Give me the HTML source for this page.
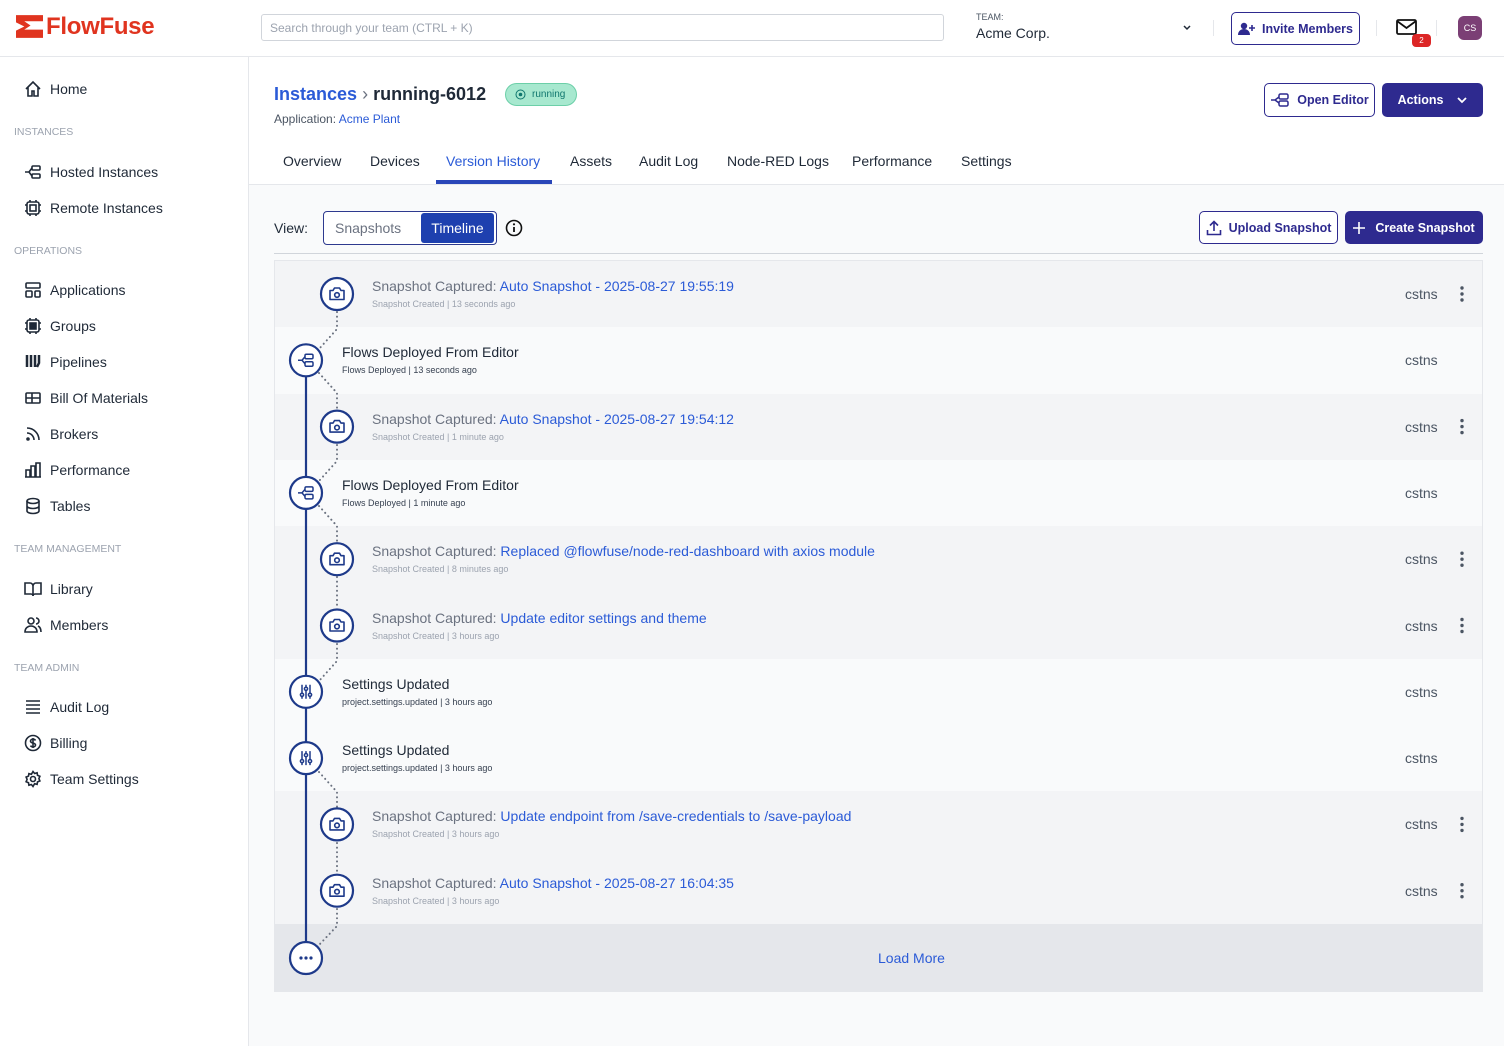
<!DOCTYPE html>
<html><head><meta charset="utf-8"><style>
*{box-sizing:border-box;margin:0;padding:0}
body{width:1504px;height:1046px;overflow:hidden;font-family:"Liberation Sans",sans-serif;color:#1f2937;background:#fff;position:relative}
.abs{position:absolute}
.hdr{left:0;top:0;width:1504px;height:57px;border-bottom:1px solid #e5e7eb;background:#fff}
.side{left:0;top:57px;width:249px;height:989px;border-right:1px solid #e5e7eb;background:#fff}
.nav{position:absolute;left:24px;font-size:14px;color:#1f2937;display:flex;align-items:center;gap:8px}
.nav svg{width:18px;height:18px;fill:none;stroke:#1f2937;stroke-width:1.6}
.sec{position:absolute;left:14px;font-size:10.5px;color:#9ca3af}
.main{left:249px;top:184px;width:1255px;height:862px;background:#f9fafb;border-top:1px solid #e5e7eb}
.tab{position:absolute;top:153px;font-size:14px;color:#1f2937}
.btn{position:absolute;border-radius:5px;font-size:12.5px;font-weight:bold;display:flex;align-items:center;justify-content:center;gap:7px}
.ol{border:1px solid #2e2a8f;color:#2e2a8f;background:#fff}
.fl{background:#2e2a8f;color:#fff}
.row{position:absolute;left:0;width:1207px;height:67px}
.g{background:#f3f4f6}.l{background:#f9fafb}
.t{position:absolute;font-size:14px;top:17px}
.s{position:absolute;font-size:9px;top:38px}
.user{position:absolute;left:1130px;top:25px;font-size:14px;color:#4b5563}
a{color:#2b5bd7;text-decoration:none}
</style></head><body>
<div class="abs hdr">
 <svg class="abs" style="left:16px;top:15px" width="27" height="23" viewBox="0 0 26 22"><path d="M0 0h26v6H8l6 4-6 4h18v8H0v-7l8-4-8-4z" fill="#e0341f"/></svg>
 <div class="abs" style="left:46px;top:13px;font-size:24px;font-weight:bold;color:#e0341f;letter-spacing:-0.3px">FlowFuse</div>
 <div class="abs" style="left:261px;top:14px;width:683px;height:27px;border:1px solid #d1d5db;border-radius:3px;font-size:12px;color:#9ca3af;padding:6px 8px">Search through your team (CTRL + K)</div>
 <div class="abs" style="left:976px;top:12px;font-size:9px;color:#4b5563">TEAM:</div>
 <div class="abs" style="left:976px;top:25px;font-size:14px;color:#1f2937">Acme Corp.</div>
 <svg class="abs" style="left:1182px;top:23px" width="10" height="10" viewBox="0 0 10 10"><path d="M2 3l3 3 3-3" stroke="#1f2937" stroke-width="1.5" fill="none"/></svg>
 <div class="abs" style="left:1213px;top:20px;width:1px;height:16px;background:#e5e7eb"></div>
 <div class="btn ol" style="left:1231px;top:12px;width:129px;height:33px"><svg width="17" height="14" viewBox="0 0 17 14"><circle cx="6" cy="4" r="3.2" fill="#2e2a8f"/><path d="M0 13c0-4 3-6 6-6s6 2 6 6z" fill="#2e2a8f"/><path d="M14 3v6M11 6h6" stroke="#2e2a8f" stroke-width="1.6"/></svg>Invite Members</div>
 <div class="abs" style="left:1376px;top:20px;width:1px;height:16px;background:#e5e7eb"></div>
 <svg class="abs" style="left:1396px;top:19px" width="21" height="16" viewBox="0 0 21 16"><rect x="1" y="1" width="19" height="14" rx="1.5" fill="none" stroke="#111" stroke-width="1.8"/><path d="M1 2l9.5 7L20 2" fill="none" stroke="#111" stroke-width="1.8"/></svg>
 <div class="abs" style="left:1412px;top:34px;width:19px;height:13px;border-radius:4px;background:#dc2626;color:#fff;font-size:8px;text-align:center;line-height:13px">2</div>
 <div class="abs" style="left:1436px;top:20px;width:1px;height:16px;background:#e5e7eb"></div>
 <div class="abs" style="left:1458px;top:16px;width:24px;height:24px;border-radius:6px;background:#7b3f75;color:#fff;font-size:9px;text-align:center;line-height:24px">CS</div>
</div>
<div class="abs side"></div>
<div class="nav" style="top:80px"><svg viewBox="0 0 18 18"><path d="M2 9L9 2l7 7M4 7v9h4v-5h2v5h4V7"/></svg>Home</div>
<div class="sec" style="top:126px">INSTANCES</div>
<div class="nav" style="top:163px"><svg viewBox="0 0 18 18"><rect x="8" y="3" width="8" height="4" rx="1"/><rect x="8" y="11" width="8" height="4" rx="1"/><path d="M1 9h4M5 9l3-4M5 9l3 4"/></svg>Hosted Instances</div>
<div class="nav" style="top:199px"><svg viewBox="0 0 18 18"><rect x="3" y="3" width="12" height="12" rx="2"/><rect x="6" y="6" width="6" height="6"/><path d="M1 6h2M1 12h2M15 6h2M15 12h2M6 1v2M12 1v2M6 15v2M12 15v2"/></svg>Remote Instances</div>
<div class="sec" style="top:245px">OPERATIONS</div>
<div class="nav" style="top:281px"><svg viewBox="0 0 18 18"><rect x="2" y="2" width="14" height="5" rx="1"/><rect x="2" y="10" width="6" height="6" rx="1"/><rect x="11" y="10" width="5" height="6" rx="1"/></svg>Applications</div>
<div class="nav" style="top:317px"><svg viewBox="0 0 18 18"><rect x="3" y="3" width="12" height="12" rx="2"/><rect x="6" y="6" width="6" height="6" fill="#1f2937"/><path d="M1 6h2M1 12h2M15 6h2M15 12h2M6 1v2M12 1v2M6 15v2M12 15v2"/></svg>Groups</div>
<div class="nav" style="top:353px"><svg viewBox="0 0 18 18"><path d="M3 2v12M7 2v12M11 2v12M15 2v8l-2 4" stroke-width="2.5"/></svg>Pipelines</div>
<div class="nav" style="top:389px"><svg viewBox="0 0 18 18"><rect x="2" y="4" width="14" height="10" rx="1"/><path d="M2 9h14M8 4v10"/></svg>Bill Of Materials</div>
<div class="nav" style="top:425px"><svg viewBox="0 0 18 18"><path d="M3 3a12 12 0 0 1 12 12M3 8a7 7 0 0 1 7 7"/><circle cx="4" cy="14" r="1" fill="#1f2937"/></svg>Brokers</div>
<div class="nav" style="top:461px"><svg viewBox="0 0 18 18"><path d="M2 16V9h4v7M7 16V5h4v11M12 16V2h4v14M1 16h16"/></svg>Performance</div>
<div class="nav" style="top:497px"><svg viewBox="0 0 18 18"><ellipse cx="9" cy="4" rx="6" ry="2.5"/><path d="M3 4v10c0 1.4 2.7 2.5 6 2.5s6-1.1 6-2.5V4M3 9c0 1.4 2.7 2.5 6 2.5S15 10.4 15 9"/></svg>Tables</div>
<div class="sec" style="top:543px">TEAM MANAGEMENT</div>
<div class="nav" style="top:580px"><svg viewBox="0 0 18 18"><path d="M1 3h5a3 3 0 0 1 3 3v10a2 2 0 0 0-2-2H1zM17 3h-5a3 3 0 0 0-3 3v10a2 2 0 0 1 2-2h6z"/></svg>Library</div>
<div class="nav" style="top:616px"><svg viewBox="0 0 18 18"><circle cx="7" cy="5" r="3"/><path d="M1 16c0-4 3-6 6-6s6 2 6 6zM12 2a3 3 0 0 1 0 6M14 10c2 1 3 3 3 6"/></svg>Members</div>
<div class="sec" style="top:662px">TEAM ADMIN</div>
<div class="nav" style="top:698px"><svg viewBox="0 0 18 18"><path d="M2 3h14M2 7h14M2 11h14M2 15h14"/></svg>Audit Log</div>
<div class="nav" style="top:734px"><svg viewBox="0 0 18 18"><circle cx="9" cy="9" r="7.5"/><path d="M11.5 6.5c-.5-1-1.5-1.3-2.5-1.3-1.5 0-2.5.8-2.5 1.9 0 2.6 5 1.3 5 3.9 0 1.1-1 1.9-2.5 1.9-1 0-2-.4-2.5-1.3M9 4v10"/></svg>Billing</div>
<div class="nav" style="top:770px"><svg viewBox="0 0 18 18"><circle cx="9" cy="9" r="2.5"/><path d="M9 1.5l1.6 2 2.5-.7.4 2.5 2.4 1-1 2.3 1 2.3-2.4 1-.4 2.5-2.5-.7L9 16.5l-1.6-2-2.5.7-.4-2.5-2.4-1 1-2.3-1-2.3 2.4-1 .4-2.5 2.5.7z"/></svg>Team Settings</div>

<div class="abs" style="left:274px;top:84px;font-size:18px;font-weight:bold"><span style="color:#2b5bd7">Instances</span> <span style="color:#6b7280;font-weight:normal">›</span> running-6012</div>
<div class="abs" style="left:505px;top:83px;width:72px;height:23px;border-radius:12px;background:#a7e8cf;border:1px solid #6ccfa8;color:#0f766e;font-size:10px;line-height:21px;padding-left:26px">running<svg class="abs" style="left:9px;top:5px" width="11" height="11" viewBox="0 0 11 11"><circle cx="5.5" cy="5.5" r="4.5" fill="none" stroke="#0f766e"/><circle cx="5.5" cy="5.5" r="1.8" fill="#0f766e"/></svg></div>
<div class="abs" style="left:274px;top:112px;font-size:12px;color:#4b5563">Application: <a>Acme Plant</a></div>
<div class="btn ol" style="left:1264px;top:83px;width:111px;height:34px"><svg width="20" height="14" viewBox="0 0 20 14"><rect x="9" y="1" width="9" height="5" rx="1.5" fill="none" stroke="#2e2a8f" stroke-width="1.5"/><rect x="9" y="8" width="9" height="5" rx="1.5" fill="none" stroke="#2e2a8f" stroke-width="1.5"/><path d="M1 7h4l4-3M5 7l4 3" stroke="#2e2a8f" stroke-width="1.5" fill="none"/></svg>Open Editor</div>
<div class="btn fl" style="left:1382px;top:83px;width:101px;height:34px;gap:14px">Actions<svg width="10" height="8" viewBox="0 0 10 8"><path d="M1 2l4 4 4-4" stroke="#fff" stroke-width="1.8" fill="none"/></svg></div>

<div class="tab" style="left:283px">Overview</div>
<div class="tab" style="left:370px">Devices</div>
<div class="tab" style="left:446px;color:#2b5bd7">Version History</div>
<div class="abs" style="left:436px;top:180px;width:116px;height:4px;background:#2a46b8"></div>
<div class="tab" style="left:570px">Assets</div>
<div class="tab" style="left:639px">Audit Log</div>
<div class="tab" style="left:727px">Node-RED Logs</div>
<div class="tab" style="left:852px">Performance</div>
<div class="tab" style="left:961px">Settings</div>

<div class="abs main">
 <div class="abs" style="left:25px;top:35px;font-size:14px">View:</div>
 <div class="abs" style="left:74px;top:26px;width:174px;height:34px;border:1px solid #2e3a8f;border-radius:4px;background:#fff">
  <div class="abs" style="left:11px;top:8px;font-size:14px;color:#6b7280">Snapshots</div>
  <div class="abs" style="left:97px;top:1px;width:73px;height:30px;border-radius:3px;background:#1e40af;color:#fff;font-size:14px;text-align:center;line-height:30px">Timeline</div>
 </div>
 <svg class="abs" style="left:256px;top:34px" width="18" height="18" viewBox="0 0 18 18"><circle cx="9" cy="9" r="7.5" fill="none" stroke="#111" stroke-width="1.6"/><path d="M9 8v5" stroke="#111" stroke-width="1.8"/><circle cx="9" cy="5.3" r="1.1" fill="#111"/></svg>
 <div class="btn ol" style="left:950px;top:26px;width:139px;height:33px"><svg width="16" height="16" viewBox="0 0 16 16"><path d="M8 11V2M4 5.5L8 1.5l4 4M1.5 10v4.5h13V10" stroke="#2e2a8f" stroke-width="1.6" fill="none"/></svg>Upload Snapshot</div>
 <div class="btn fl" style="left:1096px;top:26px;width:138px;height:33px;gap:10px"><svg width="12" height="12" viewBox="0 0 12 12"><path d="M6 0v12M0 6h12" stroke="#fff" stroke-width="1.6"/></svg>Create Snapshot</div>
 <div class="abs" style="left:25px;top:68px;width:1209px;height:1px;background:#d1d5db"></div>
</div>

<div class="abs" style="left:274px;top:260px;width:1209px;height:732px;border:1px solid #e5e7eb;background:#f3f4f6">
<div class="row g" style="top:0"><div class="t" style="left:97px;color:#6b7280">Snapshot Captured: <a>Auto Snapshot - 2025-08-27 19:55:19</a></div><div class="s" style="left:97px;color:#9ca3af">Snapshot Created | 13 seconds ago</div><div class="user">cstns</div></div>
<div class="row l" style="top:66.3px"><div class="t" style="left:67px;color:#1f2937">Flows Deployed From Editor</div><div class="s" style="left:67px;color:#374151">Flows Deployed | 13 seconds ago</div><div class="user">cstns</div></div>
<div class="row g" style="top:132.6px"><div class="t" style="left:97px;color:#6b7280">Snapshot Captured: <a>Auto Snapshot - 2025-08-27 19:54:12</a></div><div class="s" style="left:97px;color:#9ca3af">Snapshot Created | 1 minute ago</div><div class="user">cstns</div></div>
<div class="row l" style="top:198.9px"><div class="t" style="left:67px;color:#1f2937">Flows Deployed From Editor</div><div class="s" style="left:67px;color:#374151">Flows Deployed | 1 minute ago</div><div class="user">cstns</div></div>
<div class="row g" style="top:265.2px"><div class="t" style="left:97px;color:#6b7280">Snapshot Captured: <a>Replaced @flowfuse/node-red-dashboard with axios module</a></div><div class="s" style="left:97px;color:#9ca3af">Snapshot Created | 8 minutes ago</div><div class="user">cstns</div></div>
<div class="row g" style="top:331.5px"><div class="t" style="left:97px;color:#6b7280">Snapshot Captured: <a>Update editor settings and theme</a></div><div class="s" style="left:97px;color:#9ca3af">Snapshot Created | 3 hours ago</div><div class="user">cstns</div></div>
<div class="row l" style="top:397.8px"><div class="t" style="left:67px;color:#1f2937">Settings Updated</div><div class="s" style="left:67px;color:#374151">project.settings.updated | 3 hours ago</div><div class="user">cstns</div></div>
<div class="row l" style="top:464.1px"><div class="t" style="left:67px;color:#1f2937">Settings Updated</div><div class="s" style="left:67px;color:#374151">project.settings.updated | 3 hours ago</div><div class="user">cstns</div></div>
<div class="row g" style="top:530.4px"><div class="t" style="left:97px;color:#6b7280">Snapshot Captured: <a>Update endpoint from /save-credentials to /save-payload</a></div><div class="s" style="left:97px;color:#9ca3af">Snapshot Created | 3 hours ago</div><div class="user">cstns</div></div>
<div class="row g" style="top:596.7px;height:66.3px"><div class="t" style="left:97px;color:#6b7280">Snapshot Captured: <a>Auto Snapshot - 2025-08-27 16:04:35</a></div><div class="s" style="left:97px;color:#9ca3af">Snapshot Created | 3 hours ago</div><div class="user">cstns</div></div>
<div class="abs" style="left:0;top:663px;width:1207px;height:67px;background:#e5e7eb"></div>
<div class="abs" style="left:603px;top:689px;font-size:14px;color:#2b5bd7">Load More</div>
<svg class="abs" style="left:0;top:0" width="1207" height="730" viewBox="0 0 1207 730">
<defs>
<g id="cam"><path d="M-7 -3.5h3l1.5-2.5h5l1.5 2.5h3v9h-14z" fill="none" stroke="#1e3a8a" stroke-width="1.6" stroke-linejoin="round"/><circle cx="0" cy="1" r="2.3" fill="none" stroke="#1e3a8a" stroke-width="1.6"/></g>
<g id="flow"><rect x="-1" y="-6" width="8" height="4.5" rx="1.3" fill="none" stroke="#1e3a8a" stroke-width="1.5"/><rect x="-1" y="1.5" width="8" height="4.5" rx="1.3" fill="none" stroke="#1e3a8a" stroke-width="1.5"/><path d="M-8 0h4l3-3.5M-4 0l3 3.5" fill="none" stroke="#1e3a8a" stroke-width="1.5"/></g>
<g id="set" stroke="#1e3a8a" stroke-width="1.5" fill="none"><path d="M-4 -7v14M0 -7v14M4 -7v14"/><circle cx="-4" cy="3" r="1.6" fill="#fff"/><circle cx="0" cy="-3" r="1.6" fill="#fff"/><circle cx="4" cy="3" r="1.6" fill="#fff"/></g>
</defs>
<g stroke="#1e3a8a" stroke-width="2.2"><path d="M31 115V680"/></g>
<g stroke="#6b7280" stroke-width="2" stroke-dasharray="0.1 4.5" fill="none" stroke-linecap="round">
<path d="M62 51V68L44 88"/><path d="M44 112L62 132V149"/>
<path d="M62 184V200L44 220"/><path d="M44 245L62 265V281"/>
<path d="M62 316V348"/><path d="M62 383V400L44 420"/>
<path d="M44 511L62 531V546"/><path d="M62 582V613"/><path d="M62 648V665L44 684"/>
</g>
<g fill="#fff" stroke="#1e3a8a" stroke-width="2.2">
<circle cx="62" cy="33" r="16"/><circle cx="31" cy="99.3" r="16"/><circle cx="62" cy="165.6" r="16"/><circle cx="31" cy="231.9" r="16"/>
<circle cx="62" cy="298.2" r="16"/><circle cx="62" cy="364.5" r="16"/><circle cx="31" cy="430.8" r="16"/><circle cx="31" cy="497.1" r="16"/>
<circle cx="62" cy="563.4" r="16"/><circle cx="62" cy="629.7" r="16"/><circle cx="31" cy="697" r="16"/>
</g>
<use href="#cam" x="62" y="33"/><use href="#flow" x="31" y="99.3"/><use href="#cam" x="62" y="165.6"/><use href="#flow" x="31" y="231.9"/>
<use href="#cam" x="62" y="298.2"/><use href="#cam" x="62" y="364.5"/><use href="#set" x="31" y="430.8"/><use href="#set" x="31" y="497.1"/>
<use href="#cam" x="62" y="563.4"/><use href="#cam" x="62" y="629.7"/>
<g fill="#1e3a8a"><circle cx="26" cy="697" r="1.6"/><circle cx="31" cy="697" r="1.6"/><circle cx="36" cy="697" r="1.6"/></g>
<g fill="#4b5563">
<circle cx="1187" cy="27" r="1.7"/><circle cx="1187" cy="33" r="1.7"/><circle cx="1187" cy="39" r="1.7"/>
<circle cx="1187" cy="159.6" r="1.7"/><circle cx="1187" cy="165.6" r="1.7"/><circle cx="1187" cy="171.6" r="1.7"/>
<circle cx="1187" cy="292.2" r="1.7"/><circle cx="1187" cy="298.2" r="1.7"/><circle cx="1187" cy="304.2" r="1.7"/>
<circle cx="1187" cy="358.5" r="1.7"/><circle cx="1187" cy="364.5" r="1.7"/><circle cx="1187" cy="370.5" r="1.7"/>
<circle cx="1187" cy="557.4" r="1.7"/><circle cx="1187" cy="563.4" r="1.7"/><circle cx="1187" cy="569.4" r="1.7"/>
<circle cx="1187" cy="623.7" r="1.7"/><circle cx="1187" cy="629.7" r="1.7"/><circle cx="1187" cy="635.7" r="1.7"/>
</g>
</svg>
</div>
</body></html>
